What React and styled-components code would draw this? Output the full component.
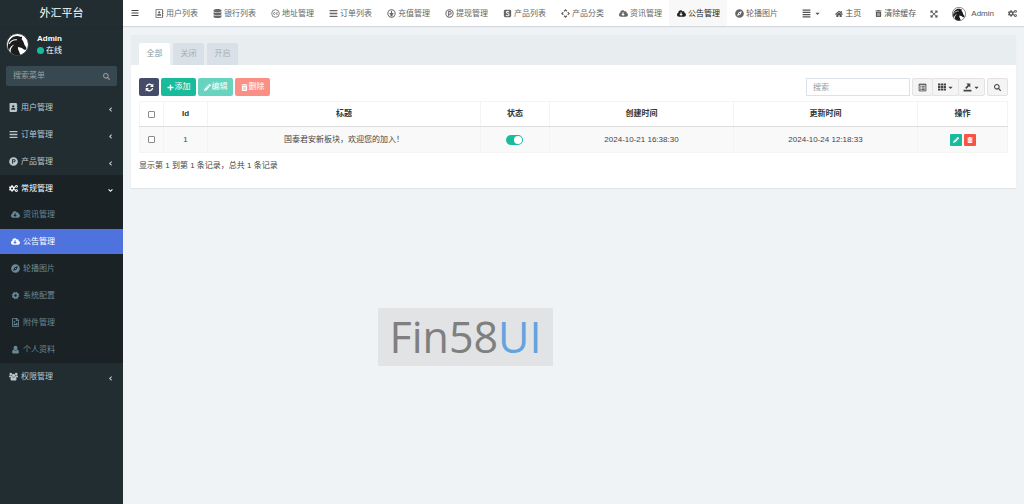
import { useState } from "react";
import styled, { createGlobalStyle } from "styled-components";
import {
  FaAddressBook,
  FaRegAddressBook,
  FaAlignJustify,
  FaAngleDown,
  FaAngleLeft,
  FaBars,
  FaCaretDown,
  FaCloudDownloadAlt,
  FaCogs,
  FaCompass,
  FaDatabase,
  FaExpandArrowsAlt,
  FaHome,
  FaPencilAlt,
  FaPlus,
  FaProductHunt,
  FaRegFileImage,
  FaSearch,
  FaTh,
  FaTrashAlt,
} from "react-icons/fa";

const GlobalStyle = createGlobalStyle`
  * {
    box-sizing: border-box;
  }
  body {
    margin: 0;
    background: #eff3f6;
    color: #444;
    font-family: "Liberation Sans", "Noto Sans CJK SC", sans-serif;
    font-size: 8px;
    line-height: 12px;
  }
  a {
    color: inherit;
    text-decoration: none;
  }
  button,
  input {
    font: inherit;
  }
  svg {
    flex-shrink: 0;
  }
`;

const Page = styled.div`
  display: flex;
  min-height: 100vh;
`;

/* ---------- sidebar ---------- */

const Sidebar = styled.aside`
  flex: 0 0 123px;
  min-width: 0;
  background: #222d32;
  color: #b8c7ce;
`;

const Brand = styled.a`
  display: block;
  height: 28px;
  line-height: 27px;
  border-bottom: 1px solid #1f292e;
  color: #fff;
  font-size: 11px;
  text-align: center;
`;

const UserPanel = styled.div`
  display: flex;
  align-items: center;
  gap: 8px;
  height: 33px;
  padding: 0 6px;
  color: #fff;
`;

const UserName = styled.div`
  font-weight: bold;
`;

const Status = styled.div`
  display: flex;
  align-items: center;
  gap: 2px;

  &::before {
    content: "";
    width: 7px;
    height: 7px;
    border-radius: 50%;
    background: #18bc9c;
  }
`;

const MenuSearch = styled.form`
  display: flex;
  height: 20px;
  margin: 5px 6px 8px;
  border-radius: 2px;
  background: #374850;
`;

const MenuSearchInput = styled.input`
  flex: 1;
  min-width: 0;
  padding: 0 7px;
  border: 0;
  background: none;
  color: #fff;

  &::placeholder {
    color: #94a0a5;
  }
`;

const MenuSearchButton = styled.button`
  display: flex;
  align-items: center;
  padding: 0 7px;
  border: 0;
  background: none;
  color: #999;
`;

const MenuList = styled.ul`
  margin: 0;
  padding: 0;
  list-style: none;
`;

const MenuLink = styled.a`
  display: flex;
  align-items: center;
  gap: 3px;
  height: 27px;
  padding: 0 9px;
  background: ${({ $open }) => ($open ? "#1a2226" : "none")};
  color: ${({ $open }) => ($open ? "#fff" : "#b8c7ce")};
`;

const Arrow = styled.span`
  display: flex;
  margin-left: auto;
  padding-top: 3px;
`;

const SubMenu = styled.ul`
  display: flex;
  flex-direction: column;
  gap: 2px;
  margin: 0;
  padding: 0 0 1px;
  background: #1a2226;
  list-style: none;
`;

const SubLink = styled.a`
  display: flex;
  align-items: center;
  gap: 3px;
  height: 25px;
  padding: 0 11px;
  background: ${({ $active }) => ($active ? "#4e73df" : "none")};
  color: ${({ $active }) => ($active ? "#fff" : "#6a8795")};
`;

/* ---------- top bar ---------- */

const Main = styled.div`
  flex: 1;
  min-width: 0;
`;

const TopBar = styled.header`
  display: flex;
  height: 26px;
  background: #fff;
  box-shadow: 0 1px 1px rgba(0, 21, 41, 0.12);
  color: #555;
`;

const SidebarToggle = styled.button`
  width: 24px;
  padding: 0;
  border: 0;
  background: none;
  color: #444;
  line-height: 0;
`;

const Tabs = styled.nav`
  display: flex;
`;

const TabLink = styled.a`
  display: flex;
  align-items: center;
  gap: 2px;
  padding: 1px 7px 0 8px;
  background: ${({ $active }) => ($active ? "#f8f8f8" : "none")};
  color: ${({ $active }) => ($active ? "#222" : "#666")};
  white-space: nowrap;
`;

const Tools = styled.div`
  display: flex;
  margin-left: auto;
`;

const ToolLink = styled.a`
  display: flex;
  align-items: center;
  gap: ${({ $gap }) => $gap || 2}px;
  padding: 1px 7px 0;
  white-space: nowrap;
`;

/* ---------- panel ---------- */

const Panel = styled.section`
  margin: 9px 8px 0;
  background: #fff;
  box-shadow: 0 1px 1px rgba(0, 0, 0, 0.05);
`;

const PanelHead = styled.div`
  display: flex;
  gap: 3px;
  padding: 8px 8px 0;
  background: #e8edf0;
`;

const PanelTab = styled.a`
  width: 31px;
  height: 22px;
  border-radius: 2px 2px 0 0;
  background: ${({ $active }) => ($active ? "#fff" : "#d9e0e7")};
  color: ${({ $active }) => ($active ? "#8b9a9c" : "#a5b0b3")};
  line-height: 22px;
  text-align: center;
`;

const PanelBody = styled.div`
  padding: 13px 8px 16px;
`;

const Toolbar = styled.div`
  display: flex;
  gap: 2px;
  margin-bottom: 5px;
`;

const Button = styled.button`
  display: flex;
  align-items: center;
  justify-content: center;
  gap: 1px;
  height: 18px;
  min-width: ${({ $icon }) => ($icon ? 20 : 35)}px;
  padding: 0;
  border: 0;
  border-radius: 2px;
  background: ${({ $color }) => $color};
  color: #fff;

  &:disabled {
    opacity: 0.65;
  }
`;

const TableSearch = styled.input`
  width: 104px;
  height: 18px;
  margin-left: auto;
  padding: 0 6px;
  border: 1px solid #dde2ea;
  background: #fff;

  &::placeholder {
    color: #999;
  }
`;

const ButtonGroup = styled.div`
  display: flex;
`;

const GrayButton = styled.button`
  display: flex;
  align-items: center;
  justify-content: center;
  gap: 1px;
  height: 18px;
  min-width: ${({ $wide }) => ($wide ? 27 : 21)}px;
  padding: 0;
  border: 1px solid #e3e3e3;
  border-radius: 2px;
  background: #f4f4f4;
  color: #444;

  & + & {
    margin-left: -1px;
  }
`;

const Table = styled.table`
  width: 100%;
  border-collapse: collapse;
  table-layout: fixed;
  text-align: center;
`;

const Th = styled.th`
  width: ${({ $width }) => $width || "auto"};
  height: 25px;
  padding: 0;
  border: 1px solid #f4f4f4;
  border-bottom-color: #ddd;
  color: #333;
`;

const Td = styled.td`
  height: 26px;
  padding: 0;
  border: 1px solid #f4f4f4;
  background: #f9f9f9;
`;

const Check = styled.input`
  display: block;
  width: 7px;
  height: 7px;
  margin: 0 auto;
  appearance: none;
  border: 1px solid #8a8a8a;
  border-radius: 1px;
  background: #fff;

  &:checked {
    background: #18bc9c;
  }
`;

const Switch = styled.button`
  display: flex;
  justify-content: ${({ $on }) => ($on ? "flex-end" : "flex-start")};
  width: 17px;
  height: 10px;
  margin: 0 auto;
  padding: 1px;
  border: 0;
  border-radius: 5px;
  background: ${({ $on }) => ($on ? "#18bc9c" : "#ccc")};

  &::before {
    content: "";
    width: 8px;
    height: 8px;
    border-radius: 50%;
    background: #fff;
  }
`;

const Actions = styled.div`
  display: flex;
  justify-content: center;
  gap: 2px;
`;

const ActionButton = styled.button`
  display: flex;
  align-items: center;
  justify-content: center;
  width: 12px;
  height: 12px;
  padding: 0;
  border: 0;
  border-radius: 1px;
  background: ${({ $color }) => $color};
  color: #fff;
`;

const Records = styled.p`
  margin: 7px 0 0;
`;

const Watermark = styled.div`
  width: 175px;
  margin: 120px 0 0 255px;
  background: #e1e3e5;
  color: #7f7f7f;
  font-family: "Open Sans", "Noto Sans", sans-serif;
  font-size: 43px;
  line-height: 58px;
  text-align: center;

  span {
    color: #64a3de;
  }
`;

/* ---------- drawings ---------- */

function HorseAvatar({ size }) {
  return (
    <svg width={size} height={size} viewBox="0 0 44 44" aria-hidden="true">
      <circle cx="22" cy="22" r="21" fill="#fff" stroke="#222" strokeWidth="1.6" />
      <path
        fill="#1c1c1c"
        d="M31 7l-1 5c3 3 4 6 5 10l4 6c1 3-1 5-4 4-2-1-3-3-6-4l-6-1c-1 5 3 8 4 15-7 2-14 0-18-5-1-6 2-11 7-15-6 2-9 6-10 12C1 25 4 13 14 7c5-2 10-2 13 0z"
      />
      <path
        fill="none"
        stroke="#fff"
        strokeWidth="2"
        d="M6 21c3-6 8-9 15-8"
      />
    </svg>
  );
}

function Glyph({ children }) {
  return (
    <svg
      width="9"
      height="9"
      viewBox="0 0 16 16"
      fill="none"
      stroke="currentColor"
      strokeWidth="1.8"
      aria-hidden="true">
      {children}
    </svg>
  );
}

const ChargeIcon = () => (
  <Glyph>
    <circle cx="8" cy="8" r="6.5" />
    <path d="M8 3.5v9M4.500 8h7M5.500 9.500L8 12l2.500-2.500" />
  </Glyph>
);

const WithdrawIcon = () => (
  <Glyph>
    <circle cx="8" cy="8" r="6.5" />
    <path d="M6.500 13V4.500h2a2.200 2.200 0 010 5h-2" />
  </Glyph>
);

const CommonsIcon = () => (
  <Glyph>
    <circle cx="8" cy="8" r="6.8" strokeWidth="1.4" />
    <path
      strokeWidth="1.500"
      d="M7.200 6.800a1.700 1.700 0 100 2.400M12 6.800a1.700 1.700 0 100 2.400"
    />
  </Glyph>
);

const LicenseIcon = () => (
  <Glyph>
    <rect x="1.500" y="1.500" width="13" height="13" rx="2.500" fill="currentColor" stroke="none" />
    <path
      stroke="#fff"
      d="M10.500 5.500C9 3.500 5.500 4 6 6.200c.4 1.800 4.500 1.500 4.700 3.800.2 2.500-4 3-5.500.8"
    />
  </Glyph>
);

const ArrowsIcon = () => (
  <Glyph>
    <path
      strokeWidth="2.400"
      d="M5.500 4L8 1.700 10.500 4M12 5.500L14.300 8 12 10.500M10.500 12L8 14.300 5.500 12M4 10.500L1.700 8 4 5.500"
    />
  </Glyph>
);

const RefreshIcon = () => (
  <Glyph>
    <path
      strokeWidth="2.400"
      d="M2.500 7A5.600 5.600 0 0112.500 4.500M13.500 9A5.600 5.600 0 013.500 11.500"
    />
    <path fill="currentColor" stroke="none" d="M14.800 1v6H9zM1.200 15V9H7z" />
  </Glyph>
);

const GearIcon = () => (
  <Glyph>
    <circle cx="8" cy="8" r="3.800" strokeWidth="3.200" />
    <circle cx="8" cy="8" r="5.800" strokeDasharray="2.300 2.255" />
  </Glyph>
);

const PersonIcon = () => (
  <Glyph>
    <path
      fill="currentColor"
      stroke="none"
      d="M8 1.500a3.500 3.500 0 013.500 3.700C11.500 7 10.500 9 8 9S4.500 7 4.500 5.200A3.500 3.500 0 018 1.500zM4.500 8C6 10.300 10 10.300 11.500 8c2 .5 2.500 3 2.500 4.800 0 1.200-.8 2.200-2 2.200H4c-1.200 0-2-1-2-2.200C2 11 2.500 8.500 4.500 8z"
    />
  </Glyph>
);

const GroupIcon = () => (
  <Glyph>
    <g fill="currentColor" stroke="none">
      <circle cx="3.200" cy="3.500" r="2.300" />
      <circle cx="12.800" cy="3.500" r="2.300" />
      <circle cx="8" cy="6" r="3" />
      <path d="M0 9.500C0 7 .6 5.700 1.800 5.700L5 6.500 5.500 9zM16 9.500c0-2.500-.6-3.800-1.800-3.800L11 6.500 10.500 9zM5 8.500c2 1.500 4 1.500 6 0 1.700.4 2.300 2.300 2.300 4.300 0 1.300-.8 2.200-2 2.200H4.700c-1.200 0-2-.9-2-2.200 0-2 .6-3.900 2.300-4.300z" />
    </g>
  </Glyph>
);

const ListIcon = () => (
  <Glyph>
    <path
      strokeWidth="1.500"
      d="M2 2h12v12H2zM2 3.200h12M4 6.500h2M7 6.500h5M4 9h2M7 9h5M4 11.500h2M7 11.500h5"
    />
  </Glyph>
);

const ExportIcon = () => (
  <Glyph>
    <path
      fill="currentColor"
      stroke="none"
      d="M1 12h14v3H1zM6 1h7v7l-2.300-2.300L6 10.500 3.800 8.300l4.700-4.800z"
    />
  </Glyph>
);

/* ---------- data ---------- */

const tabLinks = [
  { text: "用户列表", icon: <FaRegAddressBook size={9} /> },
  { text: "银行列表", icon: <FaDatabase size={9} /> },
  { text: "地址管理", icon: <CommonsIcon /> },
  { text: "订单列表", icon: <FaBars size={9} /> },
  { text: "充值管理", icon: <ChargeIcon /> },
  { text: "提现管理", icon: <WithdrawIcon /> },
  { text: "产品列表", icon: <LicenseIcon /> },
  { text: "产品分类", icon: <ArrowsIcon /> },
  { text: "资讯管理", icon: <FaCloudDownloadAlt size={9} /> },
  { text: "公告管理", icon: <FaCloudDownloadAlt size={9} />, active: true },
  { text: "轮播图片", icon: <FaCompass size={9} /> },
];

const menuLinks = [
  { text: "用户管理", icon: <FaAddressBook size={9} /> },
  { text: "订单管理", icon: <FaBars size={9} /> },
  { text: "产品管理", icon: <FaProductHunt size={9} /> },
  {
    text: "常规管理",
    icon: <FaCogs size={9} />,
    submenu: [
      { text: "资讯管理", icon: <FaCloudDownloadAlt size={9} /> },
      { text: "公告管理", icon: <FaCloudDownloadAlt size={9} />, active: true },
      { text: "轮播图片", icon: <FaCompass size={9} /> },
      { text: "系统配置", icon: <GearIcon /> },
      { text: "附件管理", icon: <FaRegFileImage size={9} /> },
      { text: "个人资料", icon: <PersonIcon /> },
    ],
  },
  { text: "权限管理", icon: <GroupIcon /> },
];

const rows = [
  {
    id: 1,
    title: "国泰君安新板块，欢迎您的加入！",
    created: "2024-10-21 16:38:30",
    updated: "2024-10-24 12:18:33",
  },
];

function SideMenu() {
  return (
    <Sidebar>
      <Brand href="#">外汇平台</Brand>
      <UserPanel>
        <HorseAvatar size={23} />
        <div>
          <UserName>Admin</UserName>
          <Status>在线</Status>
        </div>
      </UserPanel>
      <MenuSearch onSubmit={(e) => e.preventDefault()}>
        <MenuSearchInput placeholder="搜索菜单" aria-label="搜索菜单" />
        <MenuSearchButton aria-label="搜索">
          <FaSearch size={7} />
        </MenuSearchButton>
      </MenuSearch>
      <MenuList>
        {menuLinks.map((link) => (
          <li key={link.text}>
            <MenuLink href="#" $open={!!link.submenu}>
              {link.icon}
              {link.text}
              <Arrow>
                {link.submenu ? <FaAngleDown size={7} /> : <FaAngleLeft size={7} />}
              </Arrow>
            </MenuLink>
            {link.submenu && (
              <SubMenu>
                {link.submenu.map((sub) => (
                  <li key={sub.text}>
                    <SubLink href="#" $active={sub.active}>
                      {sub.icon}
                      {sub.text}
                    </SubLink>
                  </li>
                ))}
              </SubMenu>
            )}
          </li>
        ))}
      </MenuList>
    </Sidebar>
  );
}

function Header() {
  return (
    <TopBar>
      <SidebarToggle aria-label="菜单">
        <FaBars size={8} />
      </SidebarToggle>
      <Tabs>
        {tabLinks.map((tab) => (
          <TabLink key={tab.text} href="#" $active={tab.active}>
            {tab.icon}
            {tab.text}
          </TabLink>
        ))}
      </Tabs>
      <Tools>
        <ToolLink href="#" $gap={3} aria-label="标签">
          <FaAlignJustify size={9} />
          <FaCaretDown size={7} />
        </ToolLink>
        <ToolLink href="#">
          <FaHome size={8} />
          主页
        </ToolLink>
        <ToolLink href="#">
          <FaTrashAlt size={7} />
          清除缓存
        </ToolLink>
        <ToolLink href="#" aria-label="全屏">
          <FaExpandArrowsAlt size={8} />
        </ToolLink>
        <ToolLink href="#" $gap={5}>
          <HorseAvatar size={14} />
          Admin
        </ToolLink>
        <ToolLink href="#" aria-label="设置">
          <FaCogs size={9} />
        </ToolLink>
      </Tools>
    </TopBar>
  );
}

function NoticeTable() {
  const [selected, setSelected] = useState([]);
  const [enabled, setEnabled] = useState({ 1: true });

  const toggleRow = (id) => {
    setSelected(
      selected.includes(id) ? selected.filter((s) => s !== id) : [...selected, id]
    );
  };

  return (
    <PanelBody>
      <Toolbar>
        <Button $icon $color="#444c69" aria-label="刷新">
          <RefreshIcon />
        </Button>
        <Button $color="#18bc9c">
          <FaPlus size={7} />
          添加
        </Button>
        <Button $color="#18bc9c" disabled={!selected.length}>
          <FaPencilAlt size={7} />
          编辑
        </Button>
        <Button $color="#f75444" disabled={!selected.length}>
          <FaTrashAlt size={7} />
          删除
        </Button>
        <TableSearch placeholder="搜索" aria-label="搜索" />
        <ButtonGroup>
          <GrayButton aria-label="切换">
            <ListIcon />
          </GrayButton>
          <GrayButton $wide aria-label="列">
            <FaTh size={8} />
            <FaCaretDown size={7} />
          </GrayButton>
          <GrayButton $wide aria-label="导出">
            <ExportIcon />
            <FaCaretDown size={7} />
          </GrayButton>
        </ButtonGroup>
        <GrayButton aria-label="普通搜索">
          <FaSearch size={7} />
        </GrayButton>
      </Toolbar>
      <Table>
        <thead>
          <tr>
            <Th $width="24px">
              <Check
                type="checkbox"
                aria-label="全选"
                checked={selected.length === rows.length}
                onChange={() =>
                  setSelected(selected.length ? [] : rows.map((row) => row.id))
                }
              />
            </Th>
            <Th $width="44px">Id</Th>
            <Th>标题</Th>
            <Th $width="69px">状态</Th>
            <Th $width="21.2%">创建时间</Th>
            <Th $width="21.2%">更新时间</Th>
            <Th $width="90px">操作</Th>
          </tr>
        </thead>
        <tbody>
          {rows.map((row) => (
            <tr key={row.id}>
              <Td>
                <Check
                  type="checkbox"
                  aria-label={row.title}
                  checked={selected.includes(row.id)}
                  onChange={() => toggleRow(row.id)}
                />
              </Td>
              <Td>{row.id}</Td>
              <Td>{row.title}</Td>
              <Td>
                <Switch
                  role="switch"
                  aria-label="状态"
                  aria-checked={enabled[row.id]}
                  $on={enabled[row.id]}
                  onClick={() =>
                    setEnabled({ ...enabled, [row.id]: !enabled[row.id] })
                  }
                />
              </Td>
              <Td>{row.created}</Td>
              <Td>{row.updated}</Td>
              <Td>
                <Actions>
                  <ActionButton $color="#18bc9c" aria-label="编辑">
                    <FaPencilAlt size={6} />
                  </ActionButton>
                  <ActionButton $color="#f75444" aria-label="删除">
                    <FaTrashAlt size={6} />
                  </ActionButton>
                </Actions>
              </Td>
            </tr>
          ))}
        </tbody>
      </Table>
      <Records>
        显示第 1 到第 {rows.length} 条记录，总共 {rows.length} 条记录
      </Records>
    </PanelBody>
  );
}

function App() {
  return (
    <Page>
      <GlobalStyle />
      <SideMenu />
      <Main>
        <Header />
        <Panel>
          <PanelHead>
            <PanelTab href="#" $active>
              全部
            </PanelTab>
            <PanelTab href="#">关闭</PanelTab>
            <PanelTab href="#">开启</PanelTab>
          </PanelHead>
          <NoticeTable />
        </Panel>
        <Watermark>
          Fin58<span>UI</span>
        </Watermark>
      </Main>
    </Page>
  );
}

export default App;
